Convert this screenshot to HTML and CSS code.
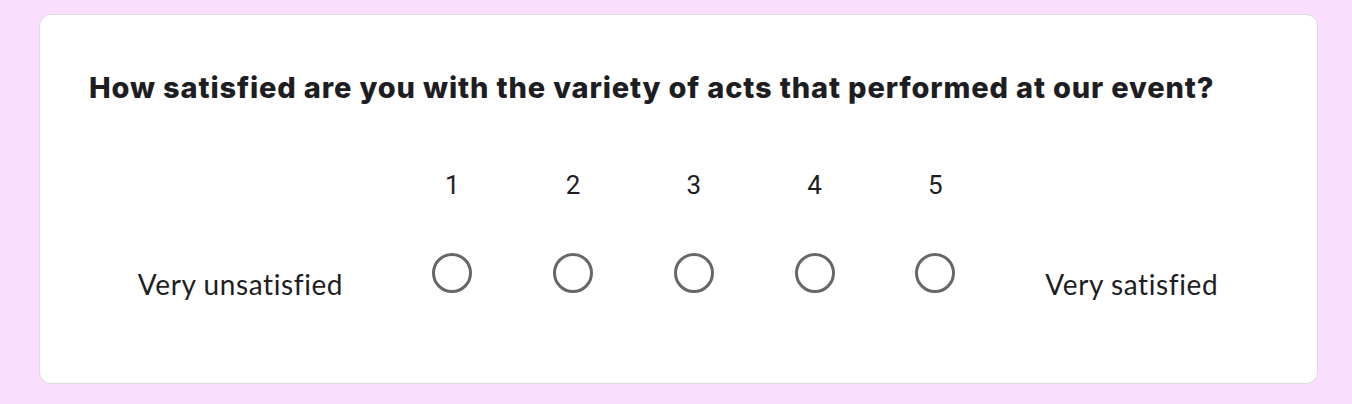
FILE: index.html
```html
<!DOCTYPE html>
<html>
<head>
<meta charset="utf-8">
<link rel="stylesheet" href="styles.css">
</head>
<body>
<div class="card">
  <h2 class="question">How satisfied are you with the variety of acts that performed at our event?</h2>
  <div class="scale">
    <div class="cell"></div>
    <div class="cell num">1</div>
    <div class="cell num">2</div>
    <div class="cell num">3</div>
    <div class="cell num">4</div>
    <div class="cell num">5</div>
    <div class="cell"></div>
    <div class="cell label">Very unsatisfied</div>
    <div class="cell radio-cell"><span class="radio"></span></div>
    <div class="cell radio-cell"><span class="radio"></span></div>
    <div class="cell radio-cell"><span class="radio"></span></div>
    <div class="cell radio-cell"><span class="radio"></span></div>
    <div class="cell radio-cell"><span class="radio"></span></div>
    <div class="cell label">Very satisfied</div>
  </div>
</div>
</body>
</html>
```
FILE: styles.css
```css
html, body { margin: 0; padding: 0; }
body {
  background: #fadefd;
  padding: 14px 34px 20px 39px;
  font-family: "Lato", "Noto Sans", sans-serif;
}
.card {
  background: #fff;
  border: 1px solid #dcdcdc;
  border-radius: 12px;
  height: 370px;
  box-sizing: border-box;
  padding: 55px 50px 0 49px;
}
.question {
  margin: 0;
  font-family: "Inter", sans-serif;
  font-weight: 800;
  font-size: 29px;
  line-height: 35px;
  color: #1e1e22;
  letter-spacing: 0.85px;
  white-space: nowrap;
}
.scale {
  display: grid;
  grid-template-columns: 303px repeat(5, 120.75px) 272px;
  grid-template-rows: 40px 100px;
  margin-top: 60px;
}
.cell {
  display: flex;
  justify-content: center;
  align-items: flex-start;
}
.num {
  font-family: "Roboto", sans-serif;
  font-size: 26px;
  line-height: 40px;
  color: #1e1e22;
}
.label {
  font-size: 28px;
  line-height: 34px;
  letter-spacing: 0.6px;
  color: #1e1e22;
  padding-top: 62px;
}
.radio-cell { padding-top: 48px; }
.radio {
  width: 40px;
  height: 40px;
  box-sizing: border-box;
  border: 3px solid #67666b;
  border-radius: 50%;
}
```
